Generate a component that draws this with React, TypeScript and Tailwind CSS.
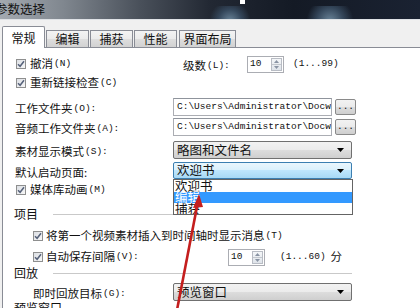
import React from "react";

const ZH = "font-['Noto_Sans_CJK_SC','Noto_Sans',sans-serif] text-[11.5px] leading-none text-[#111]";
const MONO = "font-['Liberation_Mono','DejaVu_Sans_Mono',monospace] text-[9.5px] leading-none text-[#111]";

function L({ zh, tail }: { zh: string; tail?: string }) {
  return (
    <span className="inline-flex items-center whitespace-nowrap">
      <span className={ZH}>{zh}</span>
      {tail ? <span className={MONO + " ml-[1px]"}>{tail}</span> : null}
    </span>
  );
}

function Check() {
  return (
    <span className="inline-flex w-[10px] h-[10px] shrink-0 items-center justify-center border border-[#8e8f8f] bg-[linear-gradient(135deg,#dcdfe4,#f7f7f7)]">
      <svg width="8" height="8" viewBox="0 0 8 8">
        <path d="M1 4.2 L3.1 6.3 L7 1.3" stroke="#56627a" strokeWidth="1.5" fill="none" />
      </svg>
    </span>
  );
}

function Spin({ val }: { val: string }) {
  return (
    <div className="flex h-[17px] w-[37px] items-center border border-[#abadb3] bg-white">
      <span className={MONO + " flex-1 pl-[2px]"}>{val}</span>
      <div className="mr-[1px] flex h-[13px] w-[11px] flex-col border border-[#b8bcc4] bg-[linear-gradient(#f4f6f8,#dfe4ea)]">
        <div className="flex flex-1 items-center justify-center border-b border-[#c3c7cd]">
          <svg width="5" height="3" viewBox="0 0 5 3"><path d="M0 3H5L2.5 0Z" fill="#8a94a4" /></svg>
        </div>
        <div className="flex flex-1 items-center justify-center">
          <svg width="5" height="3" viewBox="0 0 5 3"><path d="M0 0H5L2.5 3Z" fill="#8a94a4" /></svg>
        </div>
      </div>
    </div>
  );
}

function Combo({ text, focused }: { text: string; focused?: boolean }) {
  return (
    <div
      className={
        focused
          ? "flex h-[17px] w-[179px] items-center justify-between rounded-[2px] border border-[#3c7fb1] bg-[linear-gradient(#eaf6fd,#d9f0fc_50%,#bee6fd_50%,#a7d9f5)] pl-[3px] pr-[7px]"
          : "flex h-[18px] w-[179px] items-center justify-between rounded-[2px] border border-[#707070] bg-[linear-gradient(#f2f2f2,#ebebeb_50%,#dddddd_50%,#cfcfcf)] pl-[3px] pr-[7px]"
      }
    >
      <span className={ZH + " text-[12.5px]"}>{text}</span>
      <svg width="7" height="4" viewBox="0 0 7 4"><path d="M0 0H7L3.5 4Z" fill="#000" /></svg>
    </div>
  );
}

function PathInput() {
  return (
    <div className="flex items-center">
      <div className="flex h-[18px] w-[159px] items-center overflow-hidden border border-[#abadb3] border-t-[#8f949c] bg-white pl-[3px]">
        <span className={MONO + " whitespace-nowrap"}>C:\Users\Administrator\Docw</span>
      </div>
      <div className="ml-[3px] flex h-[16px] w-[21px] items-end justify-center rounded-[2px] border border-[#8a8a8a] bg-[linear-gradient(#f2f2f2,#ebebeb_50%,#dddddd_50%,#cfcfcf)] pb-[3px]">
        <span className={MONO + " text-[8px]"}>...</span>
      </div>
    </div>
  );
}

function Tab({ label, w, active }: { label: string; w: string; active?: boolean }) {
  return (
    <div
      className={
        active
          ? `relative z-10 -mb-px flex h-[22px] items-center justify-center rounded-t-[2px] border border-b-0 border-[#898c95] bg-white ${w}`
          : `flex h-[17px] items-center justify-center border border-b-0 border-[#898c95] bg-[linear-gradient(#f3f3f3,#ebebeb_50%,#dedede_50%,#d2d2d2)] ${w}`
      }
    >
      <span className={ZH + " text-[12px]"}>{label}</span>
    </div>
  );
}

export default function App() {
  return (
    <div className="relative flex h-[308px] w-[420px] flex-col overflow-hidden bg-[#f0f0f0]">
      {/* title bar */}
      <div className="relative h-[19px] shrink-0 overflow-hidden bg-[linear-gradient(90deg,#a3a9b0_0%,#80878f_15%,#4a515b_33%,#222833_50%,#141a25_70%,#1a2232_100%)]">
        <div className="absolute left-[205px] top-[6px] h-[30px] w-[50px] rounded-full bg-[radial-gradient(circle,#6a8499_0%,#34465a_40%,transparent_70%)]" />
        <div className="absolute left-[300px] top-[6px] h-[30px] w-[60px] rounded-full bg-[radial-gradient(circle,#6a8499_0%,#34465a_40%,transparent_70%)]" />
        <div className="absolute left-[240px] top-0 h-[4px] w-[5px] bg-white" />
        <span className={ZH + " absolute left-[-5px] top-[3px] text-[12.5px] text-[#0a0a0a]"}>参数选择</span>
      </div>
      <div className="h-px shrink-0 bg-[#dfe2e6]" />
      <div className="h-[6px] shrink-0" />
      {/* tabs */}
      <div className="flex h-[21px] shrink-0 items-end pl-[2px]">
        <Tab label="常规" w="w-[43px]" active />
        <div className="ml-[1px]"><Tab label="编辑" w="w-[43px]" /></div>
        <div className="ml-[1px]"><Tab label="捕获" w="w-[43px]" /></div>
        <div className="ml-[1px]"><Tab label="性能" w="w-[43px]" /></div>
        <div className="ml-[2px]"><Tab label="界面布局" w="w-[57px]" /></div>
      </div>
      {/* panel */}
      <div className="relative ml-[2px] flex flex-1 flex-col border-l border-t border-[#898c95] bg-white">
        {/* row A */}
        <div className="mt-[6px] flex h-[20px] shrink-0 items-center pl-[13px]">
          <div className="flex w-[167px] items-center gap-[4px]">
            <Check />
            <L zh="撤消" tail="(N)" />
          </div>
          <div className="w-[64px]"><L zh="级数" tail="(L):" /></div>
          <Spin val="10" />
          <span className={MONO + " ml-[9px]"}>(1...99)</span>
        </div>
        {/* row B */}
        <div className="flex h-[18px] shrink-0 items-center gap-[4px] pl-[13px]">
          <Check />
          <L zh="重新链接检查" tail="(C)" />
        </div>
        {/* row C */}
        <div className="mt-[6px] flex h-[18px] shrink-0 items-center pl-[12px]">
          <div className="w-[158px]"><L zh="工作文件夹" tail="(O):" /></div>
          <PathInput />
        </div>
        {/* row D */}
        <div className="mt-[2px] flex h-[18px] shrink-0 items-center pl-[12px]">
          <div className="w-[158px]"><L zh="音频工作文件夹" tail="(A):" /></div>
          <PathInput />
        </div>
        {/* row E */}
        <div className="mt-[5px] flex h-[18px] shrink-0 items-center pl-[12px]">
          <div className="w-[158px]"><L zh="素材显示模式" tail="(S):" /></div>
          <Combo text="略图和文件名" />
        </div>
        {/* row F */}
        <div className="mt-[3px] flex h-[17px] shrink-0 items-center pl-[12px]">
          <div className="w-[158px]"><L zh="默认启动页面:" /></div>
          <Combo text="欢迎书" focused />
        </div>
        {/* row G */}
        <div className="mt-[2px] flex h-[18px] shrink-0 items-center gap-[4px] pl-[13px]">
          <Check />
          <L zh="媒体库动画" tail="(M)" />
        </div>
        {/* group 项目 */}
        <div className="mt-[7px] flex h-[16px] shrink-0 items-center pl-[11px]">
          <span className={ZH + " text-[12px]"}>项目</span>
          <div className="ml-[15px] h-px w-[299px] bg-[#c9c9c9]" />
        </div>
        {/* row H */}
        <div className="mt-[5px] flex h-[18px] shrink-0 items-center gap-[3px] pl-[30px]">
          <Check />
          <L zh="将第一个视频素材插入到时间轴时显示消息" tail="(T)" />
        </div>
        {/* row I */}
        <div className="mt-[3px] flex h-[18px] shrink-0 items-center pl-[30px]">
          <div className="flex w-[195px] items-center gap-[3px]">
            <Check />
            <L zh="自动保存间隔" tail="(V):" />
          </div>
          <Spin val="10" />
          <span className={MONO + " ml-[15px]"}>(1...60)</span>
          <span className={ZH + " ml-[5px]"}>分</span>
        </div>
        {/* group 回放 */}
        <div className="flex h-[14px] shrink-0 items-center pl-[11px]">
          <span className={ZH + " text-[12px]"}>回放</span>
          <div className="ml-[15px] h-px w-[299px] bg-[#c9c9c9]" />
        </div>
        {/* row J */}
        <div className="mt-[3px] flex h-[18px] shrink-0 items-center pl-[30px]">
          <div className="w-[140px]"><L zh="即时回放目标" tail="(G):" /></div>
          <Combo text="预览窗口" />
        </div>
        {/* row K */}
        <div className="flex h-[14px] shrink-0 items-center pl-[11px]">
          <span className={ZH + " text-[12px]"}>预览窗口</span>
        </div>

        {/* dropdown list */}
        <div className="absolute left-[170px] top-[131px] z-10 flex h-[36px] w-[180px] flex-col overflow-hidden border border-[#646464] bg-white">
          <div className="flex h-[12px] items-center pl-[1px]">
            <span className={ZH + " text-[12.5px]"}>欢迎书</span>
          </div>
          <div className="flex h-[11px] items-center bg-[#3399ff] pl-[1px]">
            <span className={ZH + " text-[12.5px] text-white"}>编辑</span>
          </div>
          <div className="flex h-[12px] items-center pl-[1px]">
            <span className={ZH + " text-[12.5px]"}>捕获</span>
          </div>
        </div>
      </div>

      {/* red arrow */}
      <svg className="pointer-events-none absolute left-0 top-0 z-20" width="420" height="308" viewBox="0 0 420 308">
        <line x1="177" y1="310" x2="197.5" y2="204" stroke="#c41e1e" strokeWidth="2.6" />
        <path d="M199 194 L193 208 L203 207 Z" fill="#c41e1e" />
      </svg>
    </div>
  );
}
